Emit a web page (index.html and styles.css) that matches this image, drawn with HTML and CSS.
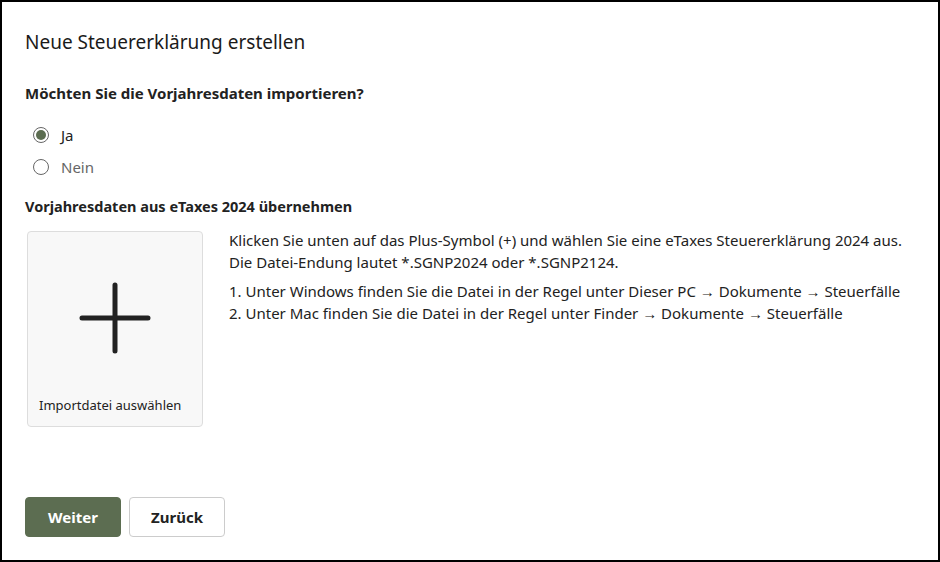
FILE: index.html
```html
<!DOCTYPE html>
<html lang="de">
<head>
<meta charset="utf-8">
<link rel="stylesheet" href="styles.css">
</head>
<body>
<div class="frame">
  <h1 class="title">Neue Steuererklärung erstellen</h1>
  <h2 class="question">Möchten Sie die Vorjahresdaten importieren?</h2>
  <div class="radios">
    <label class="radio"><span class="circle checked"></span><span class="rlabel">Ja</span></label>
    <label class="radio"><span class="circle"></span><span class="rlabel muted">Nein</span></label>
  </div>
  <h3 class="subhead">Vorjahresdaten aus eTaxes 2024 übernehmen</h3>
  <div class="importrow">
    <div class="card">
      <svg class="plus" width="74" height="74" viewBox="0 0 74 74">
        <path d="M37 4 V70 M4 37 H70" stroke="#222" stroke-width="5" stroke-linecap="round" fill="none"/>
      </svg>
      <div class="cardlabel">Importdatei auswählen</div>
    </div>
    <div class="info">
      <p class="para">Klicken Sie unten auf das Plus-Symbol (+) und wählen Sie eine eTaxes Steuererklärung 2024 aus.<br>Die Datei-Endung lautet *.SGNP2024 oder *.SGNP2124.</p>
      <p class="para">1. Unter Windows finden Sie die Datei in der Regel unter Dieser PC → Dokumente → Steuerfälle<br>2. Unter Mac finden Sie die Datei in der Regel unter Finder → Dokumente → Steuerfälle</p>
    </div>
  </div>
  <div class="buttons">
    <button class="btn primary">Weiter</button>
    <button class="btn secondary">Zurück</button>
  </div>
</div>
</body>
</html>
```
FILE: styles.css
```css
html, body {
  margin: 0;
  padding: 0;
  background: #fff;
}
body {
  font-family: "Noto Sans", "Open Sans", sans-serif;
  color: #222;
}
.frame {
  width: 940px;
  height: 562px;
  box-sizing: border-box;
  border: 2px solid #000;
  padding: 0 23px;
  display: flex;
  flex-direction: column;
}
.title {
  font-size: 19px;
  font-weight: 400;
  margin: 26px 0 0;
  line-height: 28px;
  color: #1a1a1a;
}
.question {
  font-size: 15px;
  font-weight: 700;
  margin: 26px 0 0;
  line-height: 22px;
}
.radios {
  display: flex;
  flex-direction: column;
  margin-top: 15px;
  padding-left: 8px;
}
.radio {
  display: flex;
  align-items: center;
  height: 32px;
  gap: 12px;
  font-size: 15px;
}
.circle {
  width: 16px;
  height: 16px;
  box-sizing: border-box;
  border: 1px solid #666;
  border-radius: 50%;
  display: flex;
  align-items: center;
  justify-content: center;
}
.circle.checked::after {
  content: "";
  width: 10px;
  height: 10px;
  border-radius: 50%;
  background: #5c6d51;
}
.muted { color: #666; }
.subhead {
  font-size: 14.5px;
  font-weight: 700;
  margin: 12px 0 0;
  line-height: 22px;
}
.importrow {
  display: flex;
  gap: 26px;
  margin-top: 14px;
  padding-left: 2px;
}
.card {
  width: 176px;
  height: 196px;
  box-sizing: border-box;
  background: #f8f8f8;
  border: 1px solid #ddd;
  border-radius: 4px;
  display: flex;
  flex-direction: column;
  align-items: center;
  flex-shrink: 0;
}
.plus {
  margin-top: 49px;
}
.cardlabel {
  margin-top: auto;
  margin-bottom: 12px;
  align-self: flex-start;
  padding-left: 11px;
  font-size: 13px;
  line-height: 18px;
}
.info {
  font-size: 15px;
  line-height: 21.5px;
  margin-top: -1px;
}
.para {
  margin: 0 0 8px;
}
.buttons {
  margin-top: auto;
  margin-bottom: 23px;
  display: flex;
  gap: 8px;
}
.btn {
  width: 96px;
  height: 40px;
  border-radius: 4px;
  font-family: inherit;
  font-size: 15px;
  font-weight: 700;
  cursor: pointer;
}
.primary {
  background: #5c6d51;
  color: #fff;
  border: 1px solid #5c6d51;
}
.secondary {
  background: #fff;
  color: #222;
  border: 1px solid #ccc;
}
```
